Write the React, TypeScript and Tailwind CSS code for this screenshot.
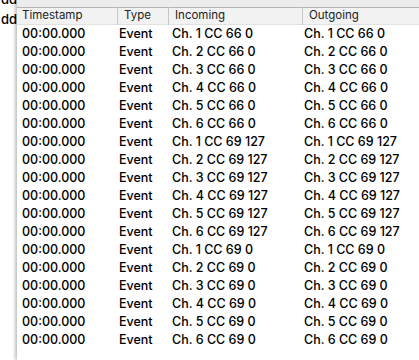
import React from 'react';

const rows = [
  ...[1, 2, 3, 4, 5, 6].map((c) => `Ch. ${c} CC 66 0`),
  ...[1, 2, 3, 4, 5, 6].map((c) => `Ch. ${c} CC 69 127`),
  ...[1, 2, 3, 4, 5, 6].map((c) => `Ch. ${c} CC 69 0`),
];

export default function App() {
  return (
    <div className="relative w-[419px] h-[360px] overflow-hidden bg-white text-black font-['Inter',sans-serif]">
      {/* partially hidden text behind the panel */}
      <div className="absolute left-[1px] top-[-9px] text-[13px] leading-[17px] font-medium">dd</div>
      <div className="absolute left-[1px] top-[11px] text-[13px] leading-[17px] font-medium">dd</div>

      {/* log panel */}
      <div className="absolute left-[17px] top-0 right-0 bottom-0 bg-white shadow-[-2px_0_3px_rgba(0,0,0,0.25)] flex flex-col">
        <div className="h-[8px] bg-[#ececec] border-b border-[#b5b5b5]" />
        <div className="flex h-[17px] items-center bg-[#f2f2f2] border-b border-[#e2e2e2] text-[11.5px] text-[#222]">
          <div className="w-[100px] pl-[5px]">Timestamp</div>
          <div className="w-[51px] pl-[6px] border-l border-[#c8c8c8]">Type</div>
          <div className="w-[134px] pl-[6px] border-l border-[#c8c8c8]">Incoming</div>
          <div className="flex-1 pl-[6px] border-l border-[#c8c8c8]">Outgoing</div>
        </div>
        <div className="flex flex-col text-[12.5px] font-medium">
          {rows.map((r, i) => (
            <div key={i} className="flex h-[18px] items-center leading-[18px]">
              <div className="w-[102px] pl-[5px]">00:00.000</div>
              <div className="w-[53px]">Event</div>
              <div className="w-[132px]">{r}</div>
              <div className="flex-1">{r}</div>
            </div>
          ))}
        </div>
      </div>
    </div>
  );
}
